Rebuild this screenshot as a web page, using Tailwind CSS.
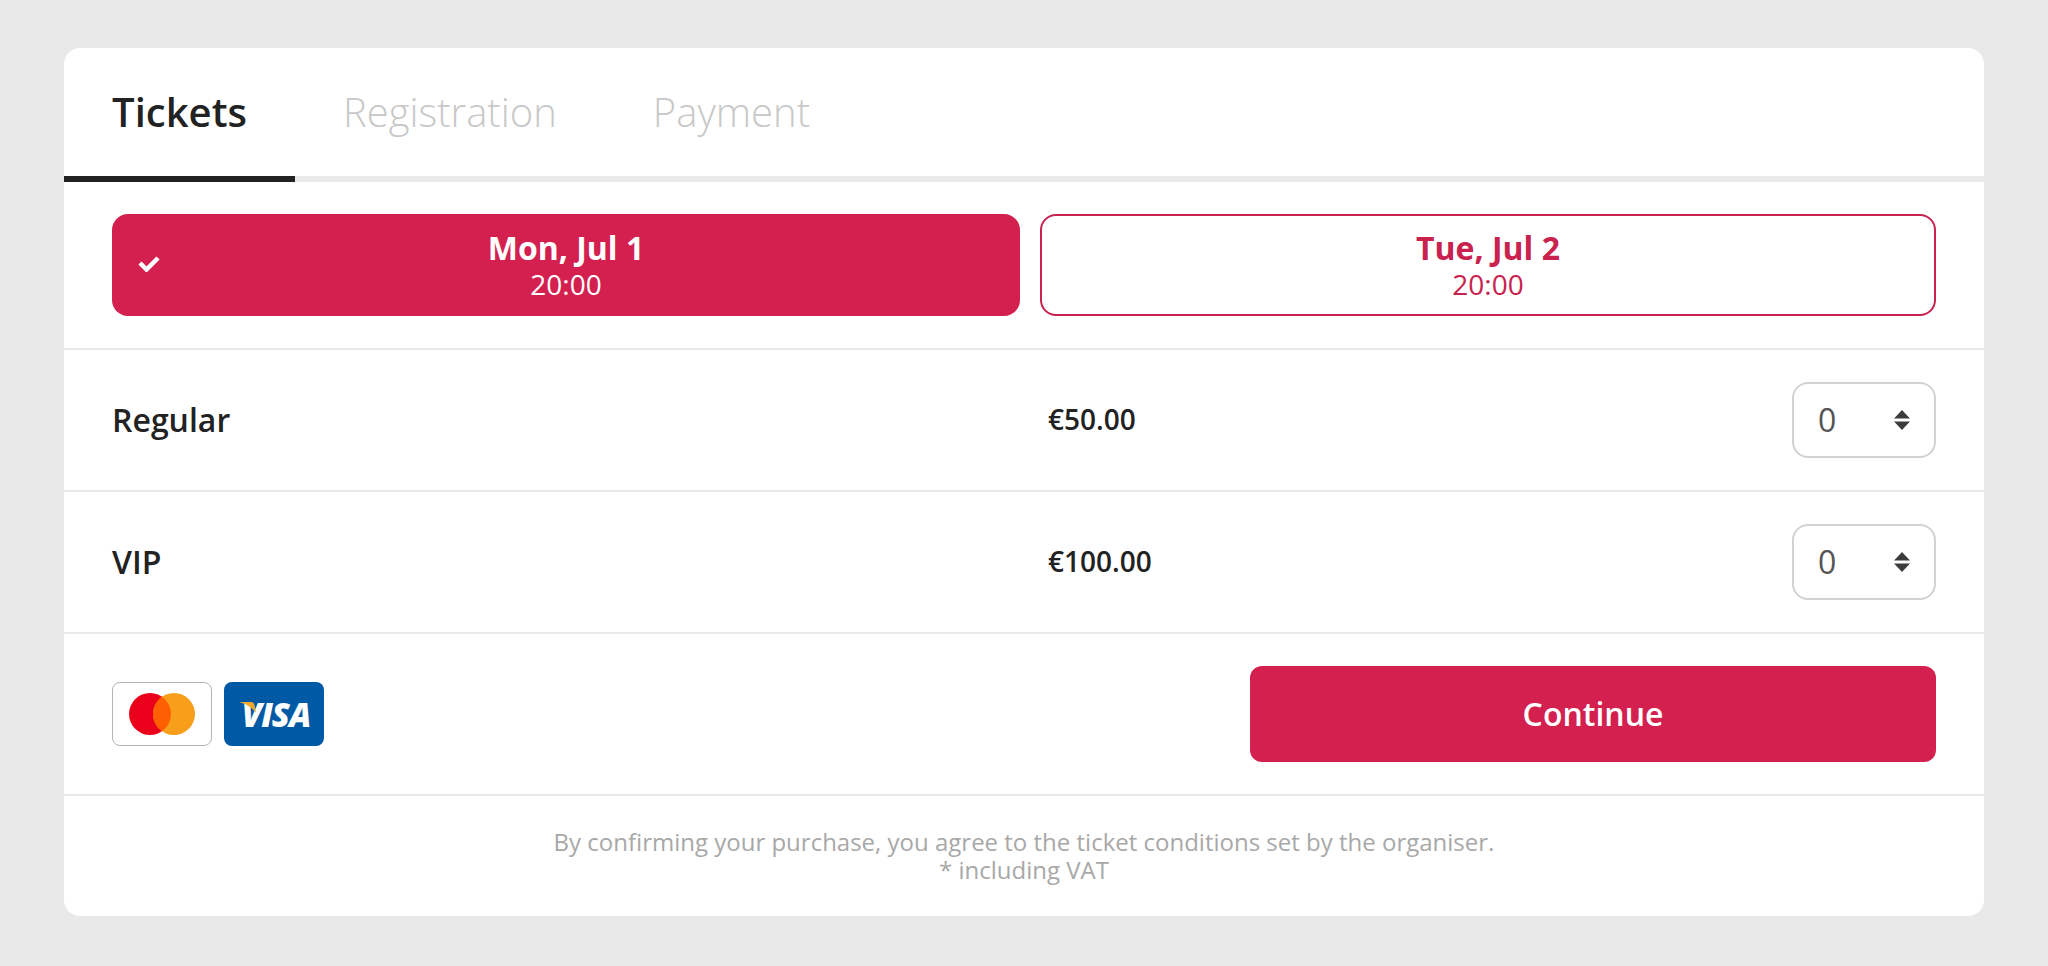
<!DOCTYPE html>
<html lang="en">
<head>
  <meta charset="UTF-8" />
  <title>Tickets</title>
  <script src="https://cdn.jsdelivr.net/npm/@tailwindcss/browser@4"></script>
</head>
<body class="min-h-screen bg-[#e9e9e9] font-['Open_Sans',sans-serif] text-[#222222]">
  <div class="mx-16 pt-12">
    <div class="bg-white rounded-2xl overflow-hidden">
      <!-- Tabs -->
      <div class="flex h-[134px] border-b-[6px] border-[#e9e9e9]">
        <div class="h-[134px] w-[231px] flex items-center justify-center border-b-[6px] border-[#222222] text-[40px] font-semibold">Tickets</div>
        <div class="flex items-center gap-[96px] pl-[48px] text-[40px] font-light text-[#c8c8c8]">
          <span>Registration</span>
          <span>Payment</span>
        </div>
      </div>

      <!-- Dates -->
      <div class="grid grid-cols-[908px_896px] gap-5 px-12 py-8">
        <button class="relative h-[102px] rounded-2xl bg-[#d4204f] text-white flex flex-col items-center justify-center">
          <svg class="absolute left-[26px] top-[42px] w-[22px] h-[16px]" viewBox="0 0 22 16" fill="none" stroke="currentColor" stroke-width="4.5"><path d="M2 7l6.500 6.500L20 2"/></svg>
          <span class="text-[32px] leading-[38px] font-bold">Mon, Jul 1</span>
          <span class="text-[28px] leading-[34px]">20:00</span>
        </button>
        <button class="h-[102px] rounded-2xl border-2 border-[#c9224f] bg-white text-[#c9224f] flex flex-col items-center justify-center">
          <span class="text-[32px] leading-[38px] font-bold">Tue, Jul 2</span>
          <span class="text-[28px] leading-[34px]">20:00</span>
        </button>
      </div>

      <!-- Ticket rows -->
      <div class="h-[142px] border-t-2 border-[#e9e9e9] px-12 flex items-center">
        <div class="w-[936px] text-[32px] font-semibold">Regular</div>
        <div class="flex-1 text-[28px] font-semibold pb-[2px]">€50.00</div>
        <div class="w-[144px] h-[76px] rounded-2xl border-2 border-[#d2d2d2] flex items-center justify-between pl-6 pr-[24px] text-[32px] text-[#555555]">
          <span>0</span>
          <svg class="w-4 h-5" viewBox="0 0 16 20" fill="#3c3c3c"><path d="M8 0l8 8.500H0zM0 11.500h16L8 20z"/></svg>
        </div>
      </div>
      <div class="h-[142px] border-t-2 border-[#e9e9e9] px-12 flex items-center">
        <div class="w-[936px] text-[32px] font-semibold">VIP</div>
        <div class="flex-1 text-[28px] font-semibold pb-[2px]">€100.00</div>
        <div class="w-[144px] h-[76px] rounded-2xl border-2 border-[#d2d2d2] flex items-center justify-between pl-6 pr-[24px] text-[32px] text-[#555555]">
          <span>0</span>
          <svg class="w-4 h-5" viewBox="0 0 16 20" fill="#3c3c3c"><path d="M8 0l8 8.500H0zM0 11.500h16L8 20z"/></svg>
        </div>
      </div>

      <!-- Payment + continue -->
      <div class="h-[162px] border-t-2 border-[#e9e9e9] px-12 flex items-center justify-between">
        <div class="flex gap-3">
          <div class="w-[100px] h-16 rounded-lg border border-[#b4b4b4] bg-white flex items-center justify-center">
            <svg class="w-[66px] h-[42px]" viewBox="0 0 66 42">
              <circle cx="21" cy="21" r="21" fill="#eb001b"/>
              <circle cx="45" cy="21" r="21" fill="#f79e1b"/>
              <path d="M33 3.770a21 21 0 0 1 0 34.460a21 21 0 0 1 0-34.460z" fill="#ff5f00"/>
            </svg>
          </div>
          <div class="relative w-[100px] h-16 rounded-lg bg-[#0059a5] flex items-center justify-center text-white text-[33px] leading-none font-extrabold italic tracking-[-1px] pl-[4px]">
            VISA
            <svg class="absolute left-[15px] top-[20px] w-[17px] h-[14px]" viewBox="0 0 17 14" fill="#f0a92c"><path d="M0 0h12c2 0 3 1 3.500 3L17 11C14 6 7 2 0 0z"/></svg>
          </div>
        </div>
        <button class="w-[686px] h-24 rounded-xl bg-[#d4204f] text-white text-[32px] font-semibold">Continue</button>
      </div>

      <!-- Footer note -->
      <div class="h-[122px] border-t-2 border-[#e9e9e9] pt-[32px] text-center text-[24px] leading-7 text-[#a8a8a8]">
        <p>By confirming your purchase, you agree to the ticket conditions set by the organiser.</p>
        <p>* including VAT</p>
      </div>
    </div>
  </div>
</body>
</html>
